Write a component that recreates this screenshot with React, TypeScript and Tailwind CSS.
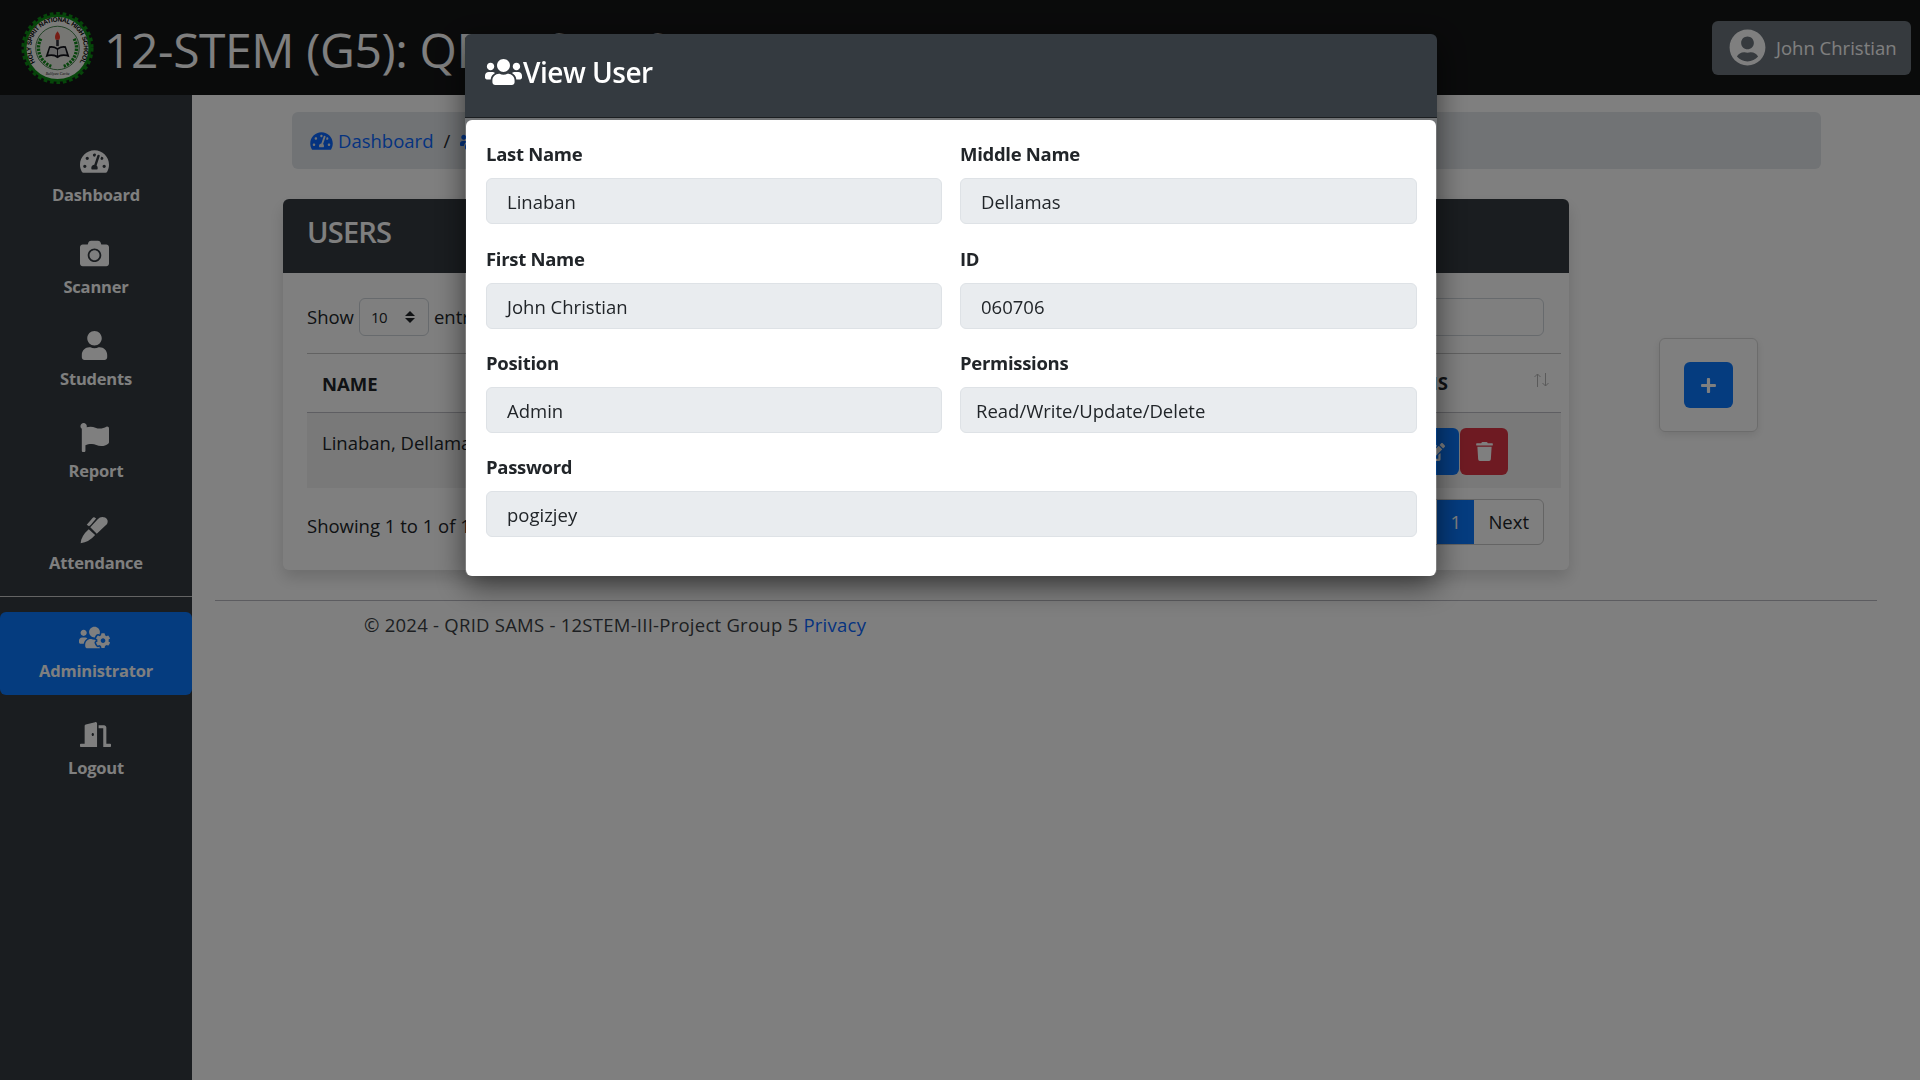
import { type ReactNode } from 'react';
import {
  FaCamera,
  FaDoorOpen,
  FaEdit,
  FaFlag,
  FaPlus,
  FaTachometerAlt,
  FaTrash,
  FaUser,
  FaUserCircle,
  FaUsers,
  FaUsersCog,
} from 'react-icons/fa';

function PenIcon() {
  return (
    <svg viewBox="0 0 90 90" className="h-[29px] w-[29px]" fill="currentColor">
      <path d="M2 88 Q3 65 27 44 L47 62 Q28 84 2 88 Z" />
      <path d="M32 38 L55 13 Q65 2 78 8 Q90 15 84 28 L52 58 Z" />
      <path d="M21 30 L39 9 Q42 6 46 8 L50 11 L33 31 L28 35 Z" />
    </svg>
  );
}

const navItems = [
  { label: 'Dashboard', icon: <FaTachometerAlt size={29} /> },
  { label: 'Scanner', icon: <FaCamera size={29} /> },
  { label: 'Students', icon: <FaUser size={29} /> },
  { label: 'Report', icon: <FaFlag size={29} /> },
  { label: 'Attendance', icon: <PenIcon /> },
];

function Seal() {
  return (
    <svg viewBox="0 0 80 80" className="h-[74px] w-[77px] shrink-0">
      <defs>
        <path id="sealRing" d="M 18.2 58.3 A 28.5 28.5 0 1 1 61.8 58.3" fill="none" />
      </defs>
      <circle cx="40" cy="40" r="36.5" fill="#0c8c14" />
      <circle cx="40" cy="40" r="37.5" fill="none" stroke="#0c8c14" strokeWidth="3" strokeDasharray="4 3" />
      <circle cx="40" cy="40" r="33.5" fill="#f6f6f2" />
      <text fontSize="7" fontWeight="700" fill="#000" fontFamily="'Liberation Sans', sans-serif">
        <textPath href="#sealRing" startOffset="50%" textAnchor="middle" textLength="122">
          HOLY SPIRIT NATIONAL HIGH SCHOOL
        </textPath>
      </text>
      <circle cx="40" cy="40" r="23.5" fill="#ecece6" stroke="#10601a" strokeWidth="0.8" />
      <path d="M 22 30 A 21 21 0 0 0 34 60" fill="none" stroke="#0f8a18" strokeWidth="3.5" strokeDasharray="2.5 1.2" />
      <path d="M 58 30 A 21 21 0 0 1 46 60" fill="none" stroke="#0f8a18" strokeWidth="3.5" strokeDasharray="2.5 1.2" />
      <path d="M 27 50 L 31 38 Q 36 37 40 40 Q 44 37 49 38 L 53 50 Q 45 47 40 51 Q 35 47 27 50 Z" fill="#111118" />
      <path d="M 32 40 Q 36 39 39.5 42 L 39.5 48 Q 35 46 30 47 Z" fill="#cfcfcf" />
      <path d="M 48 40 Q 44 39 40.5 42 L 40.5 48 Q 45 46 50 47 Z" fill="#cfcfcf" />
      <rect x="38.6" y="31" width="2.8" height="7" fill="#30303a" />
      <path d="M 40 22 Q 44 27 42 31 L 38 31 Q 36 27 40 22 Z" fill="#ee3a2c" />
      <text x="40" y="69" fontSize="4" textAnchor="middle" fill="#111" fontFamily="'Liberation Serif', serif" fontStyle="italic">
        Bulilyaw Cavite
      </text>
    </svg>
  );
}

function Navbar() {
  return (
    <header className="flex h-[95px] shrink-0 items-center justify-between bg-[#151617] pl-[19px] pr-[9px]">
      <div className="flex items-center gap-[8px]">
        <Seal />
        <span className="whitespace-nowrap pt-[4px] text-[48px] font-normal leading-none text-white tracking-[-0.4px]">
          12-STEM (G5): QRID SAMS
        </span>
      </div>
      <button className="flex h-[54px] w-[199px] items-center gap-[10px] rounded-[6px] bg-[#6c757d] pl-[17px] text-[18.5px] text-white">
        <FaUserCircle size={37} />
        John Christian
      </button>
    </header>
  );
}

function Sidebar() {
  return (
    <aside className="flex w-[192px] shrink-0 flex-col bg-[#343a40] pt-[52px] text-white">
      <nav className="flex flex-col gap-[34px]">
        {navItems.map(item => (
          <SideLink key={item.label} label={item.label} icon={item.icon} />
        ))}
      </nav>
      <hr className="mt-[23px] border-t border-[#c8c8c8]" />
      <div className="mt-[15px] flex h-[83px] flex-col items-center justify-center gap-[10px] rounded-[6px] bg-[#0a78ff]">
        <span className="pr-[3px]">
          <FaUsersCog size={25} className="w-[31px]" />
        </span>
        <span className="text-[16.5px] font-bold leading-[22px] tracking-[-0.2px]">Administrator</span>
      </div>
      <div className="mt-[27px] flex flex-col items-center gap-[10px]">
        <span className="pr-[2px]">
          <FaDoorOpen size={25} className="w-[31px]" />
        </span>
        <span className="text-[16.5px] font-bold leading-[22px] tracking-[-0.2px]">Logout</span>
      </div>
    </aside>
  );
}

function SideLink({ label, icon }: { label: string; icon: ReactNode }) {
  return (
    <a className="flex h-[58px] flex-col items-center gap-[8px]">
      <span className="pr-[3px]">{icon}</span>
      <span className="text-[16.5px] font-bold leading-[22px] tracking-[-0.2px]">{label}</span>
    </a>
  );
}

function SortArrows() {
  return (
    <svg viewBox="0 0 17 14" className="h-[14px] w-[17px]" fill="none" stroke="#b4b4b4" strokeWidth="1">
      <path d="M4.5 14 V1 M1.5 4 L4.5 1 L7.5 4" />
      <path d="M12.5 0 V13 M9.5 10 L12.5 13 L15.5 10" />
    </svg>
  );
}

function UsersCard() {
  return (
    <section className="h-[371px] w-[1286px] shrink-0 overflow-hidden rounded-[6px] bg-white shadow-[0_8px_16px_rgba(0,0,0,0.15)]">
      <div className="flex h-[74px] items-center bg-[#343a40] px-[24px] pb-[8px]">
        <h2 className="text-[29px] font-semibold text-white tracking-[-0.8px]">USERS</h2>
      </div>
      <div className="pl-[24px] pr-[8px] pt-[25px] text-[18.5px] text-[#212529]">
        <div className="flex h-[38px] items-center justify-between pr-[17px]">
          <div className="flex items-center gap-[5px]">
            Show
            <div className="flex h-[38px] w-[70px] items-center justify-between rounded-[6px] border border-[#ced4da] pl-[11px] pr-[13px] text-[15px] tracking-[-0.5px]">
              10
              <span className="flex flex-col gap-[2px]">
                <span className="h-0 w-0 border-x-[5px] border-b-[5px] border-x-transparent border-b-[#212529]" />
                <span className="h-0 w-0 border-x-[5px] border-t-[5px] border-x-transparent border-t-[#212529]" />
              </span>
            </div>
            entries per page
          </div>
          <div className="flex items-center gap-[8px]">
            Search:
            <div className="h-[38px] w-[240px] rounded-[6px] border border-[#ced4da]" />
          </div>
        </div>
        <div className="mt-[17px] flex h-[59px] items-center justify-between border-t border-[#c4c4c4] pl-[15px] pr-[11px]">
          <span className="pt-[2px] font-bold">NAME</span>
          <div className="flex items-center">
            <span className="font-bold">ACTIONS</span>
            <span className="ml-[85px] pb-[6px]">
              <SortArrows />
            </span>
          </div>
        </div>
        <div className="flex h-[76px] items-start justify-between border-t border-[#bdbdc4] bg-[#f2f2f2] pl-[15px] pr-[53px] pt-[15px]">
          <span className="leading-[30px]">Linaban, Dellamas, John Christian</span>
          <div className="flex">
            <span className="flex h-[47px] w-[48px] items-center justify-center rounded-[6px] bg-[#0a78ff] text-white">
              <FaEdit size={20} />
            </span>
            <span className="ml-px flex h-[47px] w-[48px] items-center justify-center rounded-[6px] bg-[#dc3545] text-white">
              <FaTrash size={19} />
            </span>
          </div>
        </div>
        <div className="mt-[11px] flex items-center justify-between pr-[17px]">
          <span className="pt-[8px]">Showing 1 to 1 of 1 entries</span>
          <div className="flex h-[46px] items-center overflow-hidden rounded-[6px] border border-[#c8c8c8]">
            <span className="px-[16px]">Previous</span>
            <span className="flex h-full w-[37px] items-center justify-center bg-[#0a78ff] text-white">1</span>
            <span className="pl-[14px] pr-[14px]">Next</span>
          </div>
        </div>
      </div>
    </section>
  );
}

function Main() {
  return (
    <main className="min-w-0 flex-1 pt-[17px]">
      <div className="ml-[100px] flex h-[57px] w-[1529px] items-center rounded-[6px] bg-[#e2e6ea] pl-[18px] text-[18.5px] text-[#0a66ff]">
        <FaTachometerAlt size={20} className="mr-[5px] w-[23px]" />
        Dashboard
        <span className="mx-[10px] text-[#212529]">/</span>
        <FaUsersCog size={20} className="mr-[5px] w-[25px]" />
        Administrator
      </div>
      <div className="ml-[91px] mt-[30px] flex items-start">
        <UsersCard />
        <div className="ml-[90px] mt-[139px] flex h-[94px] w-[99px] items-center justify-center rounded-[6px] border border-[#d8d8d8] shadow-[0_3px_8px_rgba(0,0,0,0.1)]">
          <span className="flex h-[46px] w-[49px] items-center justify-center rounded-[6px] bg-[#0a78ff] text-white">
            <FaPlus size={17} />
          </span>
        </div>
      </div>
      <footer className="ml-[23px] mt-[30px] w-[1662px] border-t border-[#b8b8c0] pl-[149px] pt-[10px] text-[18.5px] text-[#3a3f44] tracking-[0.25px]">
        © 2024 - QRID SAMS - 12STEM-III-Project Group 5 <a className="text-[#0a66ff]">Privacy</a>
      </footer>
    </main>
  );
}

function Field({ label, value, wide, tight }: { label: string; value: string; wide?: boolean; tight?: boolean }) {
  return (
    <div className={wide ? 'col-span-2 -mt-px' : ''}>
      <label className="mb-[12px] block text-[18.5px] font-bold leading-[24px] text-[#212529] tracking-[-0.3px]">
        {label}
      </label>
      <div
        className={`flex h-[46px] items-center rounded-[6px] border border-[#dee2e6] bg-[#e9ecef] pt-[2px] text-[18.5px] text-[#212529] ${
          tight ? 'pl-[15px]' : 'pl-[20px]'
        }`}>
        {value}
      </div>
    </div>
  );
}

function ViewUserModal() {
  return (
    <div className="fixed inset-0 bg-black/50 pl-[465px] pt-[34px]">
      <div className="w-[972px] rounded-[6px] shadow-[0_10px_30px_rgba(0,0,0,0.55)]">
        <div className="flex h-[84px] items-center gap-[1px] rounded-t-[6px] border-b border-[#1b1e21] bg-[#343a40] pl-[20px] pb-[7px] text-white">
          <FaUsers size={36} className="w-[37px]" />
          <h3 className="text-[28px] font-semibold tracking-[-0.5px]">View User</h3>
        </div>
        <div className="mx-px mt-[2px] grid grid-cols-[456px_457px] gap-x-[18px] gap-y-[22.5px] rounded-[6px] bg-white pb-[39px] pl-[20px] pr-[19px] pt-[22px]">
          <Field label="Last Name" value="Linaban" />
          <Field label="Middle Name" value="Dellamas" />
          <Field label="First Name" value="John Christian" />
          <Field label="ID" value="060706" />
          <Field label="Position" value="Admin" />
          <Field label="Permissions" value="Read/Write/Update/Delete" tight />
          <Field label="Password" value="pogizjey" wide />
        </div>
      </div>
    </div>
  );
}

export default function App() {
  return (
    <div className="flex h-screen flex-col overflow-hidden bg-white font-['Open_Sans','Noto_Sans',sans-serif]">
      <Navbar />
      <div className="flex min-h-0 flex-1">
        <Sidebar />
        <Main />
      </div>
      <ViewUserModal />
    </div>
  );
}
